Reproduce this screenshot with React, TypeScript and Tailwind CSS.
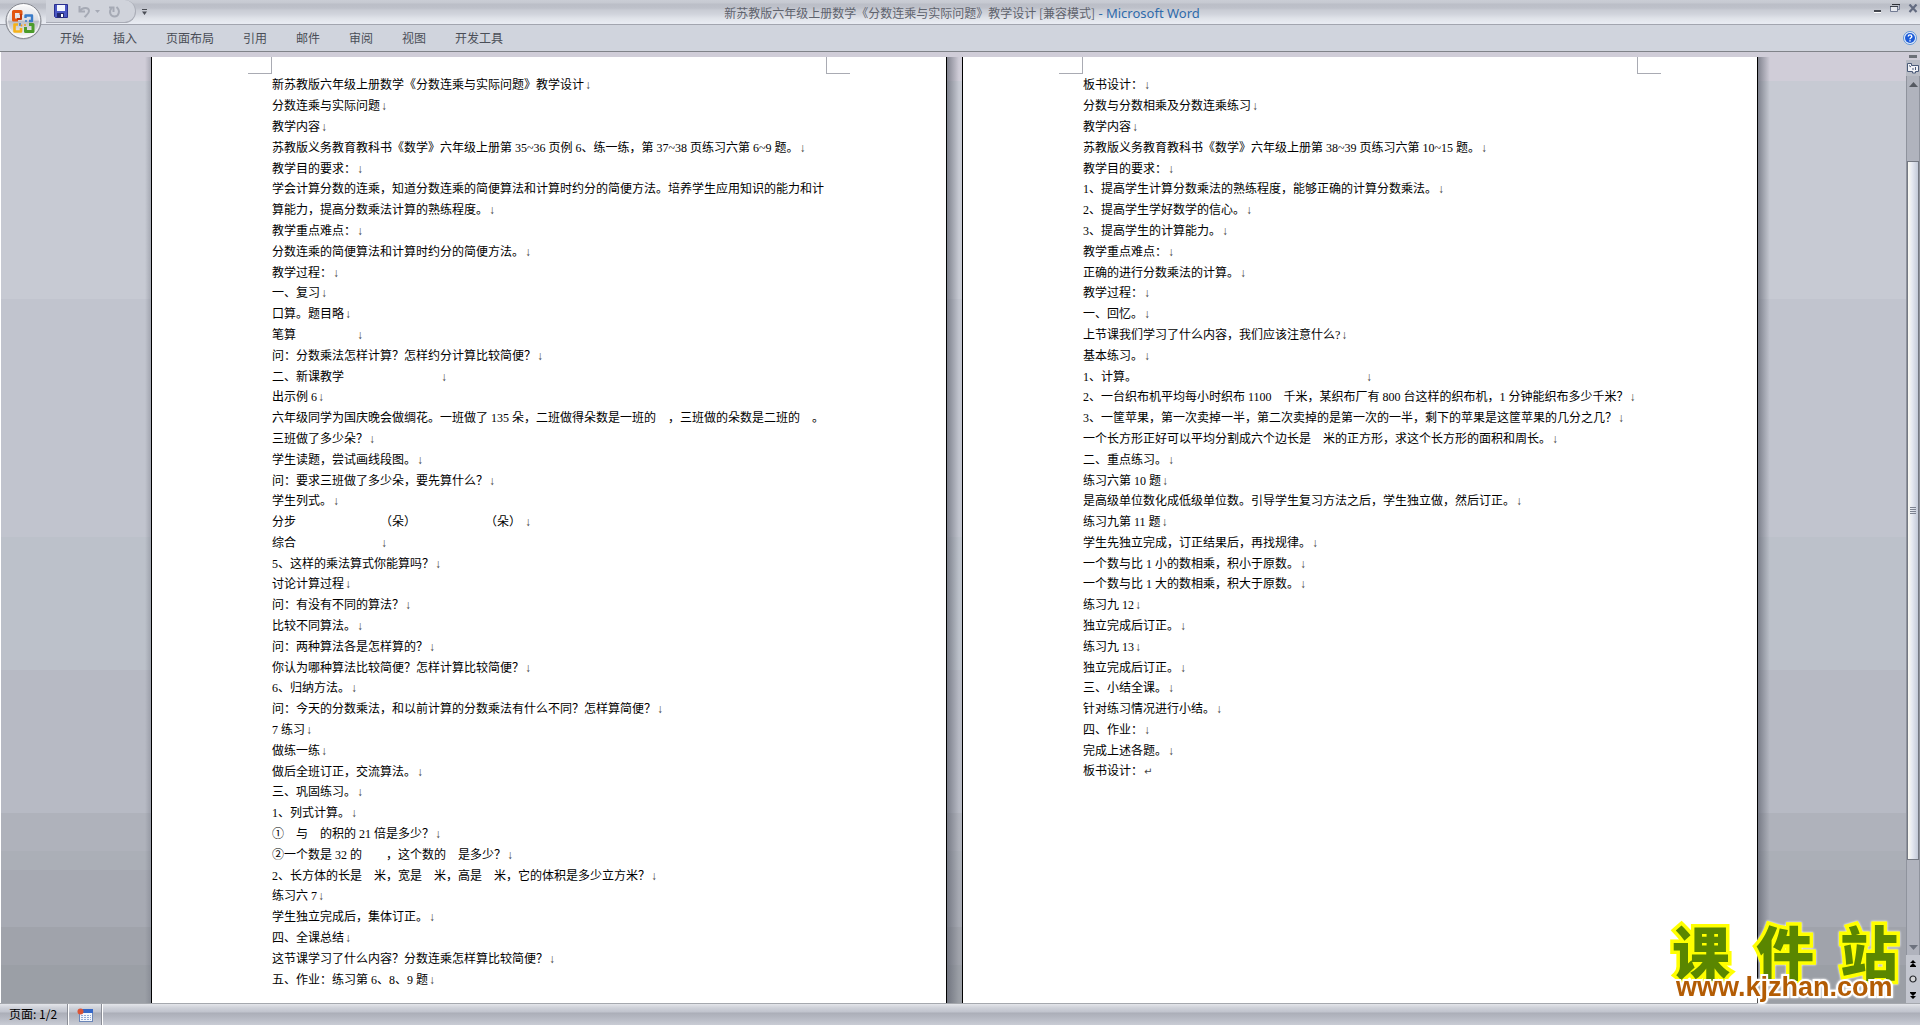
import { type ReactNode } from "react";

type Mark = "line" | "para" | "none";

interface Line {
  text: string;
  mark?: Mark;
}

const tabs = ["开始", "插入", "页面布局", "引用", "邮件", "审阅", "视图", "开发工具"];

// Latin digits sit a quarter em away from the Chinese text, \u3000 stands for a missing formula
const leftPage: Line[] = [
  { text: "新苏教版六年级上册数学《分数连乘与实际问题》教学设计" },
  { text: "分数连乘与实际问题" },
  { text: "教学内容" },
  { text: "苏教版义务教育教科书《数学》六年级上册第 35~36 页例 6、练一练，第 37~38 页练习六第 6~9 题。" },
  { text: "教学目的要求：" },
  {
    text: "学会计算分数的连乘，知道分数连乘的简便算法和计算时约分的简便方法。培养学生应用知识的能力和计",
    mark: "none",
  },
  { text: "算能力，提高分数乘法计算的熟练程度。" },
  { text: "教学重点难点：" },
  { text: "分数连乘的简便算法和计算时约分的简便方法。" },
  { text: "教学过程：" },
  { text: "一、复习" },
  { text: "口算。题目略" },
  { text: "笔算\u3000\u3000\u3000\u3000\u3000" },
  { text: "问：分数乘法怎样计算？怎样约分计算比较简便？" },
  { text: "二、新课教学\u3000\u3000\u3000\u3000\u3000\u3000\u3000\u3000" },
  { text: "出示例 6" },
  {
    text: "六年级同学为国庆晚会做绸花。一班做了 135 朵，二班做得朵数是一班的\u3000，三班做的朵数是二班的\u3000。",
    mark: "none",
  },
  { text: "三班做了多少朵？" },
  { text: "学生读题，尝试画线段图。" },
  { text: "问：要求三班做了多少朵，要先算什么？" },
  { text: "学生列式。" },
  { text: "分步\u3000\u3000\u3000\u3000\u3000\u3000\u3000（朵）\u3000\u3000\u3000\u3000\u3000   （朵） " },
  { text: "综合\u3000\u3000\u3000\u3000\u3000\u3000\u3000" },
  { text: "5、这样的乘法算式你能算吗？" },
  { text: "讨论计算过程" },
  { text: "问：有没有不同的算法？" },
  { text: "比较不同算法。" },
  { text: "问：两种算法各是怎样算的？" },
  { text: "你认为哪种算法比较简便？怎样计算比较简便？" },
  { text: "6、归纳方法。" },
  { text: "问：今天的分数乘法，和以前计算的分数乘法有什么不同？怎样算简便？" },
  { text: "7 练习" },
  { text: "做练一练" },
  { text: "做后全班订正，交流算法。" },
  { text: "三、巩固练习。" },
  { text: "1、列式计算。" },
  { text: "①\u3000与\u3000的积的 21 倍是多少？" },
  { text: "②一个数是 32 的\u3000\u3000，这个数的\u3000是多少？" },
  { text: "2、长方体的长是\u3000米，宽是\u3000米，高是\u3000米，它的体积是多少立方米？" },
  { text: "练习六 7" },
  { text: "学生独立完成后，集体订正。" },
  { text: "四、全课总结" },
  { text: "这节课学习了什么内容？分数连乘怎样算比较简便？" },
  { text: "五、作业：练习第 6、8、9 题" },
];

const rightPage: Line[] = [
  { text: "板书设计：" },
  { text: "分数与分数相乘及分数连乘练习" },
  { text: "教学内容" },
  { text: "苏教版义务教育教科书《数学》六年级上册第 38~39 页练习六第 10~15 题。" },
  { text: "教学目的要求：" },
  { text: "1、提高学生计算分数乘法的熟练程度，能够正确的计算分数乘法。" },
  { text: "2、提高学生学好数学的信心。" },
  { text: "3、提高学生的计算能力。" },
  { text: "教学重点难点：" },
  { text: "正确的进行分数乘法的计算。" },
  { text: "教学过程：" },
  { text: "一、回忆。" },
  { text: "上节课我们学习了什么内容，我们应该注意什么?" },
  { text: "基本练习。" },
  {
    text: "1、计算。\u3000\u3000\u3000\u3000\u3000\u3000\u3000\u3000\u3000\u3000\u3000\u3000\u3000\u3000\u3000\u3000\u3000\u3000\u3000",
  },
  { text: "2、一台织布机平均每小时织布 1100\u3000千米，某织布厂有 800 台这样的织布机，1 分钟能织布多少千米？" },
  { text: "3、一筐苹果，第一次卖掉一半，第二次卖掉的是第一次的一半，剩下的苹果是这筐苹果的几分之几？" },
  { text: "一个长方形正好可以平均分割成六个边长是\u3000米的正方形，求这个长方形的面积和周长。" },
  { text: "二、重点练习。" },
  { text: "练习六第 10 题" },
  { text: "是高级单位数化成低级单位数。引导学生复习方法之后，学生独立做，然后订正。" },
  { text: "练习九第 11 题" },
  { text: "学生先独立完成，订正结果后，再找规律。" },
  { text: "一个数与比 1 小的数相乘，积小于原数。" },
  { text: "一个数与比 1 大的数相乘，积大于原数。" },
  { text: "练习九 12" },
  { text: "独立完成后订正。" },
  { text: "练习九 13" },
  { text: "独立完成后订正。" },
  { text: "三、小结全课。" },
  { text: "针对练习情况进行小结。" },
  { text: "四、作业：" },
  { text: "完成上述各题。" },
  { text: "板书设计：", mark: "para" },
];

function OfficeButton() {
  return (
    <button
      type="button"
      aria-label="Office 按钮"
      className="absolute left-1 top-0.5 z-10 h-[38px] w-[38px]"
    >
      <svg viewBox="0 0 38 38" className="h-full w-full">
        <defs>
          <linearGradient id="orb" x1="0" y1="0" x2="0" y2="1">
            <stop offset="0" stopColor="#fbfbfc" />
            <stop offset="0.48" stopColor="#dcdde2" />
            <stop offset="0.5" stopColor="#b9bcc5" />
            <stop offset="1" stopColor="#ffffff" />
          </linearGradient>
        </defs>
        <circle cx="19.500" cy="20" r="17.500" fill="#8b8e98" opacity="0.5" />
        <circle cx="19.500" cy="19" r="17.500" fill="url(#orb)" stroke="#84878f" />
        <circle cx="19.500" cy="19" r="16" fill="none" stroke="#fff" strokeOpacity="0.7" />
        <g fill="none" strokeLinejoin="round">
          <path d="M17 13V9.500H9.500V18H14" stroke="#e2560f" strokeWidth="3" />
          <path d="M17 12V17H13" stroke="#c43a0a" strokeWidth="2" />
          <path d="M21.500 16V13.500H28V19H25" stroke="#3a7bc8" strokeWidth="2.400" />
          <path d="M14 22.500H10.500V29.500H17V26" stroke="#f5b21a" strokeWidth="2.600" />
          <path d="M21.500 25V29.500H29V22.500H25" stroke="#4c9c2b" strokeWidth="3" />
          <path d="M21 19H23M16 21V24" stroke="#3a7bc8" strokeWidth="1.500" />
          <path d="M17.500 22.500V24.500M21 22V24" stroke="#f2a01e" strokeWidth="1.500" />
        </g>
      </svg>
    </button>
  );
}

function SaveIcon() {
  return (
    <svg viewBox="0 0 14 14" className="h-3.5 w-3.5">
      <path d="M0.500 0.500H13.500V13.500H1.500L0.500 12.500Z" fill="#4a57c4" stroke="#2a2f8e" />
      <rect x="3" y="1" width="8" height="6" fill="#f3f6ff" />
      <rect x="3" y="9" width="7" height="4.500" fill="#23286f" />
      <rect x="7" y="10" width="2" height="3" fill="#fff" />
    </svg>
  );
}

function UndoIcon() {
  return (
    <svg viewBox="0 0 13 13" className="h-[13px] w-[13px]" fill="none" stroke="#a6aab5" strokeWidth="2">
      <path d="M1.500 1V6.500H7" />
      <path d="M2 6C4 2.500 11 1.500 11 6C11 8.500 9 9.500 6.500 12" />
    </svg>
  );
}

function RedoIcon() {
  return (
    <svg viewBox="0 0 13 13" className="h-[13px] w-[13px]" fill="none" stroke="#a6aab5" strokeWidth="2">
      <path d="M1 2.500H5.500V7" />
      <path d="M3.500 3C0.500 7 2.500 11.500 6.500 11.500C10.500 11.500 13 6 8.500 2" />
    </svg>
  );
}

function TitleBar() {
  return (
    <header className="grid h-[25px] grid-cols-[1fr_auto_1fr] border-b border-[#a2a5af] bg-[linear-gradient(#cacdd5_0px,#c6c9d1_3px,#bbbec7_4px,#bec1ca_8px,#c9ccd4_10px,#d1d4dc_14px,#dfe2e8_18px,#e8ebf2_23px)]">
      <div className="flex items-start">
        <div className="ml-[46px] flex h-[23px] w-[90px] items-center rounded-r-full border-b border-r border-[#a9acb6] bg-[#d0d3db] pl-2">
          <button type="button" aria-label="保存">
            <SaveIcon />
          </button>
          <button type="button" aria-label="撤消" className="ml-2.5">
            <UndoIcon />
          </button>
          <button type="button" aria-label="撤消选项" className="ml-1">
            <svg viewBox="0 0 5 3" className="h-[3px] w-[5px]">
              <path d="M0 0H5L2.500 3Z" fill="#a6aab5" />
            </svg>
          </button>
          <button type="button" aria-label="重复" className="ml-2">
            <RedoIcon />
          </button>
        </div>
        <button type="button" aria-label="自定义快速访问工具栏" className="ml-1.5 flex h-[23px] items-center">
          <svg viewBox="0 0 5 6" className="h-1.5 w-[5px]">
            <path d="M0 0H5V1H0ZM0 2.500H5L2.500 6Z" fill="#4a4d55" />
          </svg>
        </button>
      </div>
      <h1 className="whitespace-pre pl-1 text-[12px] leading-[25px] text-[#5f636d]">
        新苏教版六年级上册数学《分数连乘与实际问题》教学设计 [兼容模式]
        <span className="font-['Noto_Sans'] text-[13px] text-[#2f6bab]"> - Microsoft Word</span>
      </h1>
      <div className="flex items-start justify-end gap-2 pr-0.5 pt-1">
        <button type="button" aria-label="最小化">
          <svg viewBox="0 0 9 10" className="h-2.5 w-[9px]">
            <path d="M1 6H8V8H1Z" fill="#44474f" />
            <path d="M1 8H8V9H1Z" fill="#fff" />
          </svg>
        </button>
        <button type="button" aria-label="向下还原">
          <svg viewBox="0 0 10 10" className="h-2.5 w-2.5" fill="none" stroke="#727b93">
            <path d="M2.500 0.500H9.500V5.500H8" />
            <path d="M2 0.500H10" stroke="#2f3239" />
            <path d="M0.500 2.500H7.500V7.500H0.500Z" fill="#e6e8ee" />
            <path d="M0 2.500H8" stroke="#3c404a" />
          </svg>
        </button>
        <button type="button" aria-label="关闭">
          <svg viewBox="0 0 10 10" className="h-2.5 w-2.5">
            <path d="M1.500 0.500L8.500 8M8.500 0.500L1.500 8" stroke="#636b80" strokeWidth="2.200" />
          </svg>
        </button>
      </div>
    </header>
  );
}

function Ribbon() {
  return (
    <nav className="flex h-[27px] items-center justify-between border-b border-[#808389] bg-[#d0d4dd]">
      <ul className="flex gap-[29px] pl-[60px]">
        {tabs.map((tab) => (
          <li key={tab}>
            <button type="button" className="block text-[12px] leading-[26px] text-[#4a4e57]">
              {tab}
            </button>
          </li>
        ))}
      </ul>
      <button type="button" aria-label="帮助" className="mr-[3px]">
        <svg viewBox="0 0 14 14" className="h-3.5 w-3.5">
          <circle cx="7" cy="7" r="6.500" fill="#e8f0fb" stroke="#5f93d6" />
          <circle cx="7" cy="7" r="5" fill="#1c5bd8" />
          <path d="M5.200 5.500C5.200 3.300 8.800 3.300 8.800 5.500C8.800 6.800 7 6.800 7 8.300M7 9.200V10.600" fill="none" stroke="#fff" strokeWidth="1.400" />
        </svg>
      </button>
    </nav>
  );
}

function LineMark({ mark }: { mark: Mark }) {
  if (mark === "none") return null;
  if (mark === "para") return <span className="pl-px font-['DejaVu_Sans'] text-[10px] text-[#444444]">↵</span>;
  return <span className="pl-px font-bold text-[#444444]">↓</span>;
}

function Page({ lines }: { lines: Line[] }) {
  return (
    <article className="flex max-w-[796px] flex-1 flex-col border-x border-black bg-white">
      <div className="flex h-[17px] shrink-0 justify-between px-24">
        <span className="w-6 border-b border-r border-[#a9abb3]" />
        <span className="w-6 border-b border-l border-[#a9abb3]" />
      </div>
      <div className="grid flex-1 grid-rows-[repeat(44,minmax(0,1fr))] items-center pb-[13px] pl-[120px] pt-px font-['Liberation_Serif','Noto_Sans_CJK_SC',serif] text-[12px] leading-[16px] text-black [text-spacing-trim:space-all]">
        {lines.map((line, i) => (
          <p key={i} className="whitespace-pre">
            {line.text}
            <LineMark mark={line.mark ?? "line"} />
          </p>
        ))}
      </div>
    </article>
  );
}

function ScrollButton({ label, className, children }: { label: string; className: string; children: ReactNode }) {
  return (
    <button type="button" aria-label={label} className={`flex w-full shrink-0 items-center justify-center ${className}`}>
      {children}
    </button>
  );
}

function ScrollBar() {
  return (
    <aside className="flex w-3.5 shrink-0 flex-col items-center">
      <span className="mb-0.5 mt-[3px] h-[3px] w-2 shrink-0 bg-[#6d7078]" />
      <ScrollButton label="标尺" className="h-4 bg-[#b9bcc5]">
        <svg viewBox="0 0 12 12" className="h-3 w-3">
          <path d="M0.500 1.500H4.500V3.500H11.500V9.500H8.500V11H5.500V9.500H0.500Z" fill="#f2f2f6" stroke="#4a5a78" />
          <path d="M2 3.500L4 5M6 6V8M8.500 5V8" stroke="#4a5a78" />
        </svg>
      </ScrollButton>
      <div className="flex w-full flex-1 flex-col border-x border-[#8f939d] bg-[#b0b3bd]">
        <ScrollButton label="向上滚动" className="h-4">
          <svg viewBox="0 0 9 5" className="h-[5px] w-[9px]">
            <path d="M4.500 0L9 5H0Z" fill="#555961" />
          </svg>
        </ScrollButton>
        <span className="grow-[70]" />
        <div className="flex grow-[697] items-center justify-center border border-[#747882] bg-[linear-gradient(90deg,#fbfaf2,#e6e9f1_40%,#c3c9d8)]">
          <svg viewBox="0 0 6 7" className="h-[7px] w-1.5" stroke="#7c8290">
            <path d="M0 0.500H6M0 2.500H6M0 4.500H6M0 6.500H6" />
          </svg>
        </div>
        <span className="grow-[80]" />
        <ScrollButton label="向下滚动" className="h-4">
          <svg viewBox="0 0 9 5" className="h-[5px] w-[9px]">
            <path d="M4.500 5L9 0H0Z" fill="#6d727e" />
          </svg>
        </ScrollButton>
      </div>
      <div className="flex w-full flex-col bg-[#c3c6cf]">
        <ScrollButton label="前一页" className="h-4">
          <svg viewBox="0 0 6 7" className="h-[7px] w-1.5">
            <path d="M3 0L6 3H0ZM3 3L6 6H0ZM0 6H6V7H0Z" />
          </svg>
        </ScrollButton>
        <ScrollButton label="选择浏览对象" className="h-4">
          <svg viewBox="0 0 8 8" className="h-2 w-2">
            <circle cx="4" cy="4" r="3" fill="#d4d5d8" stroke="#26282d" strokeWidth="1.200" />
          </svg>
        </ScrollButton>
        <ScrollButton label="下一页" className="h-4">
          <svg viewBox="0 0 6 7" className="h-[7px] w-1.5">
            <path d="M0 0H6V1H0ZM0 1H6L3 4ZM0 4H6L3 7Z" />
          </svg>
        </ScrollButton>
      </div>
    </aside>
  );
}

function StatusBar() {
  return (
    <footer className="flex h-[22px] items-stretch border-t border-[#a5a8ae] bg-[linear-gradient(#e3e5ea_0px,#cdd0d8_4px,#c0c3cd_8px,#abaeb8_9px,#b6b9c3_14px,#c9ccd5_21px)]">
      <span className="w-[68px] border-r border-[#8b8e97] pl-[9px] text-[12px] leading-[20px] text-black">
        页面: 1/2
      </span>
      <button type="button" aria-label="宏录制" className="flex w-[34px] items-center justify-center border-l border-r border-l-white border-r-[#8b8e97]">
        <svg viewBox="0 0 16 14" className="h-3.5 w-4">
          <rect x="2.500" y="1.500" width="13" height="12" fill="#f4f7fd" stroke="#6b86b8" />
          <rect x="2" y="1" width="14" height="4" fill="#3567c8" />
          <path d="M4 7.500H14M4 9.500H14M4 11.500H14" stroke="#94abd6" strokeDasharray="2 1" />
          <circle cx="3.500" cy="3.500" r="3" fill="#dc5335" />
        </svg>
      </button>
      <span className="border-l border-white" />
    </footer>
  );
}

function Watermark() {
  return (
    <a
      href="#"
      className="absolute bottom-[25px] right-[22px] z-20 block w-[226px] drop-shadow-[0_0_1px_#fff]"
    >
      <span className="flex justify-between font-['Liberation_Sans','Noto_Sans_CJK_SC',sans-serif] text-[58px] font-black leading-[38px] text-[#5a8600] [-webkit-text-stroke:7px_#ffff00] [paint-order:stroke_fill]">
        <span>课</span>
        <span>件</span>
        <span>站</span>
      </span>
      <span className="relative block pl-1 font-['Liberation_Sans',sans-serif] text-[27px] font-bold leading-[26px] text-[#b35c04] [-webkit-text-stroke:4px_#fff] [paint-order:stroke_fill]">
        www.kjzhan.com
      </span>
    </a>
  );
}

export default function App() {
  return (
    <div
      lang="zh-CN"
      className="relative flex min-h-screen flex-col bg-[#c7cad3] font-['Noto_Sans_CJK_SC',sans-serif] [text-spacing-trim:space-all]"
    >
      <OfficeButton />
      <TitleBar />
      <Ribbon />
      <div className="flex flex-1 bg-[linear-gradient(#d0cdd8_3%,#c7cad3_3%,#c7cad3_26%,#c1c4ce_26%,#c1c4ce_51%,#bcc1ca_51%,#bcc1ca_65%,#b7bac4_65%,#b7bac4_80%,#afb2bb_80%,#afb2bb_84%,#abafb7_84%,#abafb7_86%,#a7aab3_86%,#a7aab3_92%,#a0a3ab_92%,#a0a3ab_96%,#9b9fa6_96%)]">
        <main className="flex flex-1 justify-center border-l border-white pl-0.5 pt-[5px]">
          <span className="w-3 bg-[linear-gradient(90deg,transparent_50%,#70748066)]" />
          <Page lines={leftPage} />
          <span className="w-[15px] bg-[linear-gradient(90deg,#606470b3,transparent_80%)]" />
          <Page lines={rightPage} />
          <span className="w-3 bg-[linear-gradient(90deg,#606470b3,transparent)]" />
        </main>
        <ScrollBar />
      </div>
      <StatusBar />
      <Watermark />
    </div>
  );
}
